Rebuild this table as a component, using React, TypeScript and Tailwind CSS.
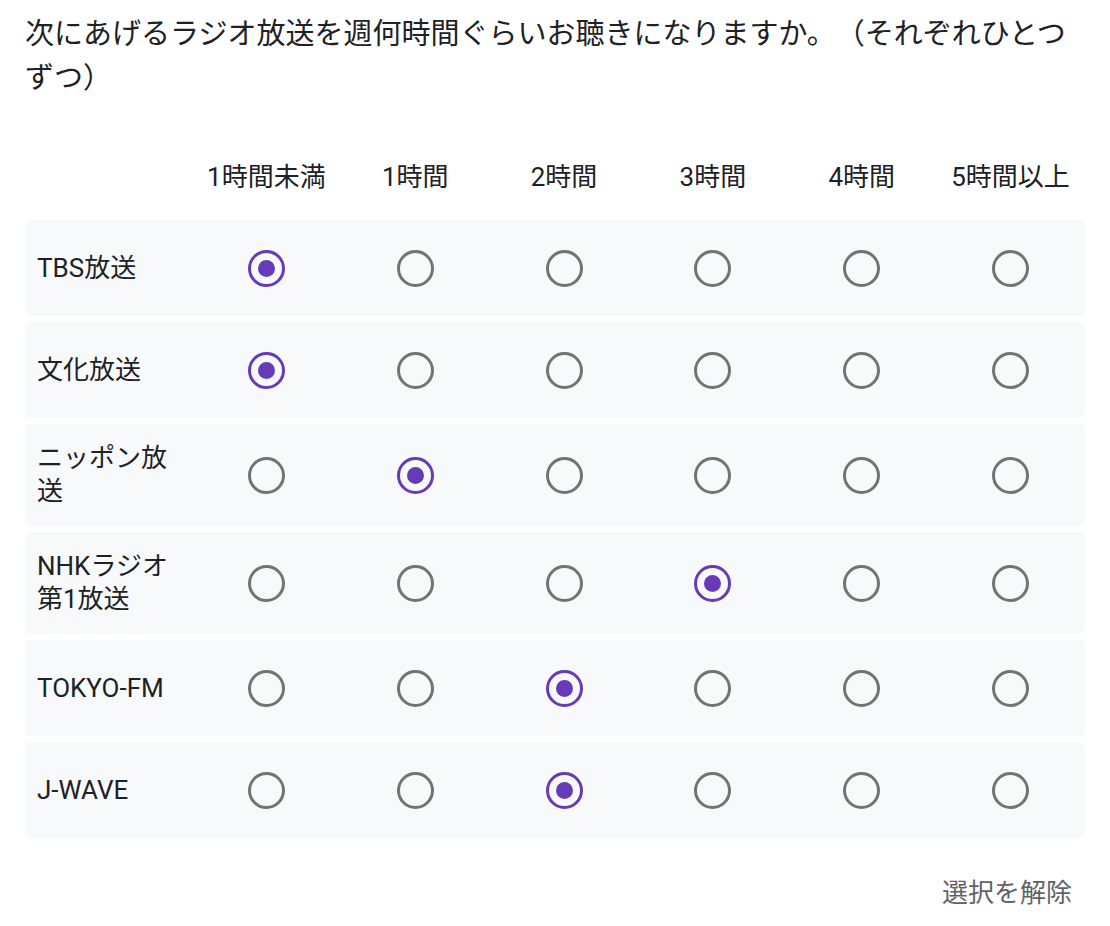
import React from 'react';

const columns = ['1時間未満', '1時間', '2時間', '3時間', '4時間', '5時間以上'];

const rows: { label: string; selected: number }[] = [
  { label: 'TBS放送', selected: 0 },
  { label: '文化放送', selected: 0 },
  { label: 'ニッポン放送', selected: 1 },
  { label: 'NHKラジオ第1放送', selected: 3 },
  { label: 'TOKYO-FM', selected: 2 },
  { label: 'J-WAVE', selected: 2 },
];

const Radio: React.FC<{ checked: boolean }> = ({ checked }) => {
  if (checked) {
    return (
      <div className="w-[37px] h-[37px] rounded-full border-[3px] border-[#673ab7] flex items-center justify-center">
        <div className="w-[17px] h-[17px] rounded-full bg-[#673ab7]"></div>
      </div>
    );
  }
  return <div className="w-[37px] h-[37px] rounded-full border-[3px] border-[#737373]"></div>;
};

const App: React.FC = () => {
  return (
    <div className="w-[1110px] min-h-[926px] bg-white px-[25px] pt-[12px] font-['Roboto','Noto_Sans_CJK_JP',sans-serif] text-[#202124] [text-spacing-trim:space-all]">
      <div className="text-[29px] leading-[44px]">
        次にあげるラジオ放送を週何時間ぐらいお聴きになりますか。（それぞれひとつずつ）
      </div>

      <div className="mt-[55px] grid grid-cols-[167px_repeat(6,1fr)] h-[45px] items-center text-[26px]">
        <div></div>
        {columns.map((c) => (
          <div key={c} className="text-center whitespace-nowrap">
            {c}
          </div>
        ))}
      </div>

      <div className="mt-[20px] flex flex-col gap-[6px]">
        {rows.map((r) => (
          <div
            key={r.label}
            className="grid grid-cols-[167px_repeat(6,1fr)] min-h-[96px] items-center bg-[#f8f9fa] rounded-[6px]"
          >
            <div className="pl-[12px] pr-[10px] py-[18px] text-[26px] leading-[33px]">{r.label}</div>
            {columns.map((c, i) => (
              <div key={c} className="flex items-center justify-center">
                <Radio checked={i === r.selected} />
              </div>
            ))}
          </div>
        ))}
      </div>

      <div className="mt-[37px] flex justify-end">
        <button className="pr-[13px] text-[26px] leading-[36px] text-[#5f6368]">選択を解除</button>
      </div>
    </div>
  );
};

export default App;
